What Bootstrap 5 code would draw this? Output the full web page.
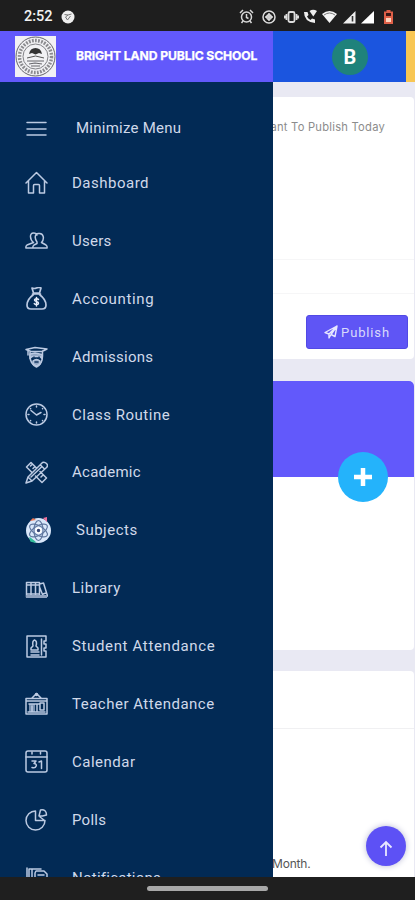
<!DOCTYPE html>
<html lang="en">
<head>
<meta charset="utf-8">
<meta name="viewport" content="width=device-width, initial-scale=1">
<title>Bright Land Public School</title>
<link href="https://cdn.jsdelivr.net/npm/bootstrap@5.3.0/dist/css/bootstrap.min.css" rel="stylesheet">
<style>
body{font-family:Inter,Roboto,sans-serif;background:#e9e9f3;width:415px;height:900px;overflow:hidden}
svg{display:block;flex:none}
.status{height:31px;background:#1e1e1e;color:#f2f2f2;font:500 14.5px/31px Roboto,sans-serif;padding:2px 21px 0 24px}
.status-icons{gap:5px;margin-right:1px}
.status-icons svg:nth-child(2){margin:0 3px}
.status-icons svg:nth-child(3){margin-right:-1px}
.stage{height:846px}
.side{width:273px;background:#022a55}
.brand{height:51px;background:#6259fb;padding-left:15px;color:#fff;font-size:12.2px;font-weight:700;letter-spacing:-.13px;-webkit-text-stroke:.25px #fff}
.brand-name{margin-left:20px}
.menu{padding-top:20px;color:#d0d9ea;font-family:Roboto,sans-serif;font-size:15px;letter-spacing:.5px}
.menu-row{height:57.9px;padding-left:25px;flex:none}
.menu-row:first-child{height:52px}
.menu-row svg{fill:none;stroke:#bccae2;stroke-width:1.5;stroke-linecap:round;stroke-linejoin:round}
.menu-row span{margin:.5px 0 0 24px;white-space:nowrap}
.menu-row.wide span{margin-left:28px}
.menu-row.wide .after-badge{margin-left:24px}
.menu-row .snug{letter-spacing:.25px}
.menu-row .airy{letter-spacing:.64px}
.page{width:142px}
.topbar{height:51px;background:#1b55df;border-right:9px solid #f8c653;padding-left:59px}
.avatar{width:36px;height:36px;background:#1f827b;color:#fff;font:700 20px/1 Roboto,sans-serif}
.panel{background:#fff;border-radius:0 4px 4px 0;width:141px;flex:none}
.publish-card{margin-top:15px;height:262px}
.prompt{height:59px;padding-right:29px;font:11.2px/60px Inter,sans-serif;color:#8c8c8c;letter-spacing:.23px}
.field{border-bottom:1px solid #f6f6f7}
.publish{width:102px;height:34px;margin:21px 6px 0 auto;background:#5f55f5;border:1px solid #5149e5;border-radius:3px;color:#d9dafb;font:13px Roboto,sans-serif;letter-spacing:.85px;gap:3px}
.profile{margin-top:22px;height:269px}
.cover{height:96px;background:#6259fb;border-radius:0 5px 0 0}
.plus{width:50px;height:50px;background:#24b3fb;right:26px;top:71px}
.report{margin-top:21px;height:206px;border-radius:0 4px 0 0}
.report-head{height:58px;border-bottom:1px solid #f0f0f2}
.month{font-size:12px;color:#555;line-height:16px;margin:127px 0 0 -1px;letter-spacing:-.2px}
.totop{width:40px;height:40px;background:#5d51f5;right:9px;bottom:11px;box-shadow:0 0 6px #b7b9d4}
.gesture{height:23px;background:#1f1f1f;padding-left:147px}
.pill{width:121px;height:5px;border-radius:3px;background:#a8a8a8}
</style>
<script src="https://cdn.jsdelivr.net/npm/bootstrap@5.3.0/dist/js/bootstrap.bundle.min.js"></script>
</head>
<body>
<header class="status d-flex align-items-center">
  <span>2:52</span>
  <svg class="ms-2" width="14" height="14" viewBox="0 0 14 14"><circle cx="7" cy="7" r="6.5" fill="#eee"/><path d="M3.500 4.500l3.500.5 3.500-1M7 5l-2.500 2 2 3 3-4" fill="none" stroke="#777"/></svg>
  <div class="status-icons d-flex align-items-center ms-auto">
    <svg width="15" height="15" viewBox="0 0 15 15" fill="none" stroke="#d8d8d8" stroke-width="1.5"><circle cx="7.5" cy="8" r="5"/><path d="M1 4l3-3M14 4l-3-3M7.500 5v3.500l2 1M4 12l-1.500 2M11 12l1.500 2"/></svg>
    <svg width="14" height="14" viewBox="0 0 14 14" fill="none" stroke="#ddd" stroke-width="1.500"><circle cx="7" cy="7" r="6"/><circle cx="7" cy="7" r="2.300"/><path d="M7 3v8M3 7h8"/></svg>
    <svg width="15" height="14" viewBox="0 0 15 14" fill="none" stroke="#ddd" stroke-width="1.800"><rect x="4.500" y="2" width="6" height="10" rx="1.500"/><path d="M2.500 4v6M12.500 4v6M.700 5.500v3M14.300 5.500v3"/></svg>
    <svg width="14" height="15" viewBox="0 0 14 15"><path d="M1 3Q1 13 12 14v-3.500l-3-1-1.500 1.500Q5 9.500 4 7.500L5.500 6 4.500 3z" fill="#eee"/><path d="M6.500 2q3.500-2.500 7.500 0l-3.700 5.500z" fill="#eee"/></svg>
    <svg width="15" height="14" viewBox="0 0 15 14"><path d="M0 4Q7.500-2 15 4L7.500 13z" fill="#f4f4f4"/><path d="M2 5Q7.500 1 13 5" fill="none" stroke="#777"/></svg>
    <svg width="14" height="14" viewBox="0 0 14 14"><path d="M1 13.500L13.500 1v12.500z" fill="#eee"/><path d="M10.500 6v5.500" stroke="#333" stroke-width="1.600"/></svg>
    <svg width="14" height="14" viewBox="0 0 14 14"><path d="M0 13.500L13 1v12.500z" fill="#fff"/></svg>
    <svg class="ms-1" width="9" height="14" viewBox="0 0 9 14"><path d="M2.500 0h4v1.500H9V14H0V1.500h2.500z" fill="#df6048"/><path d="M2 3h5v3H2z" fill="#3a1917"/><path d="M2 8h5v4H2z" fill="#ffd5bd"/></svg>
  </div>
</header>
<div class="stage d-flex overflow-hidden">
  <aside class="side d-flex flex-column flex-shrink-0">
    <div class="brand d-flex align-items-center flex-shrink-0">
      <svg width="41" height="41" viewBox="0 0 41 41"><path fill="#f1f1f4" d="M0 0h41v41H0z"/><g fill="none" stroke="#66666b"><circle cx="20.500" cy="20.500" r="19.500" stroke-width="1"/><circle cx="20.500" cy="20.500" r="16" stroke-width="3.500" stroke="#8a8a8e" stroke-dasharray="1.800 1.300"/><circle cx="20.500" cy="20.500" r="12.500" stroke-width=".8"/><path d="M12 25h17M14 28l6-1 7 1M16 30h9" stroke-width="1.200"/></g><path d="M14 18q1-6 6.500-6T27 18l-3-1-3.500 1.500L17 17z" fill="#333"/><path d="M12 22l8.500-2 8.500 2" fill="none" stroke="#555"/></svg>
      <span class="brand-name text-nowrap">BRIGHT LAND PUBLIC SCHOOL</span>
    </div>
    <nav class="menu d-flex flex-column flex-grow-1 overflow-hidden">
      <div class="menu-row wide d-flex align-items-center"><svg width="23" height="23" viewBox="0 0 23 23"><path d="M2 5.500h19M2 12h19M2 18h19"/></svg><span class="snug">Minimize Menu</span></div>
      <div class="menu-row d-flex align-items-center"><svg width="23" height="23" viewBox="0 0 23 23"><path d="M1 12L11.500 1.500 22 12M3.500 10v12h5v-7.500q0-1 1-1h4q1 0 1 1V22h5V10"/></svg><span>Dashboard</span></div>
      <div class="menu-row d-flex align-items-center"><svg width="23" height="23" viewBox="0 0 23 23"><path d="M8.500 13.500C5 11 4 4 8.500 4q3 0 3.500 2M8.500 13.500L2 16q-1.500 1-1 3h12M12 13C9 9 10 4 14 4.500c5-.5 5.500 6 2.500 9L21 16q1.500 1 1 3H8q-.5-2 1-3l3-1.500z"/></svg><span class="snug">Users</span></div>
      <div class="menu-row d-flex align-items-center"><svg width="23" height="23" viewBox="0 0 23 23"><path d="M7 1q2 1 4.500 0T16 1l-1.500 5h-6zM7.500 7h8M8.500 7.500C4 11 2 14 2 18q0 4 4 4h11q4 0 4-4c0-4-2-7-6.500-10.500" stroke-width="1.700"/><path d="M13.500 12.500c-1-1.300-4-1-4 .5 0 2 4 1 4 3.200 0 1.600-3 2-4.200.4M11.500 10.500v8.500" stroke="#e9effb"/></svg><span class="airy">Accounting</span></div>
      <div class="menu-row d-flex align-items-center"><svg width="23" height="23" viewBox="0 0 23 23"><path d="M1 4.500L10 2.500l12 1.500-5 2.500H6zM5 6v5q0 8 6.500 11 6-3 6-11V6M3 5v5"/><path d="M5 9l5-1 7 1.500v4l-2-2H7l-2 2zM8 16q3.500-3 7 0v3l-3.500 2L8 19z" fill="#91a5c2"/><path d="M9 12v1M14 12v1M10 17h3" stroke="#173a64"/></svg><span class="snug">Admissions</span></div>
      <div class="menu-row d-flex align-items-center"><svg width="23" height="23" viewBox="0 0 23 23"><circle cx="11.500" cy="11.500" r="10.500"/><path d="M6 7.500l5.500 4.500L16 9.500M11.500 3v1M11.500 19v1M3 11.500h1M19 11.500h1M5.500 5.500l.1.100M17.500 5.500l.1.100M5.500 17.500l.1.100M17.500 17.500l.1.100"/></svg><span>Class Routine</span></div>
      <div class="menu-row d-flex align-items-center"><svg width="23" height="23" viewBox="0 0 23 23"><path d="M6 1.500L1.500 6l5 5m4 4l6.500 6.500 4.500-4.500-6.500-6.500m-4-4L6 1.500M7.500 3L5.500 5M10 5.500l-2 2M18 14l-2 2M1 22l2-6L17.500 1.500q2-1 4 1t0 4L7 20zM3 16l4 4M15.500 4l4 4M6 16L17 5.500"/></svg><span class="snug">Academic</span></div>
      <div class="menu-row wide d-flex align-items-center"><svg width="27" height="27" viewBox="0 0 27 27"><circle cx="13.500" cy="13.500" r="12.500" fill="#d9e7fa" stroke="none"/><path d="M5 4l3-3 3 2z" fill="#ef7651" stroke="none"/><path d="M18 1l4-1v5z" fill="#ef729d" stroke="none"/><path d="M5 21l5 4-4-1z" fill="#35bd9b" stroke="#35bd9b"/><g stroke="#60779f" stroke-width="1.200"><ellipse cx="13.500" cy="13.500" rx="10" ry="4.500" transform="rotate(30 13.500 13.500)"/><ellipse cx="13.500" cy="13.500" rx="10" ry="4.500" transform="rotate(90 13.500 13.500)"/><ellipse cx="13.500" cy="13.500" rx="10" ry="4.500" transform="rotate(150 13.500 13.500)"/></g><circle cx="13.500" cy="13.500" r="2.500" fill="#354575" stroke="#fff"/></svg><span class="after-badge">Subjects</span></div>
      <div class="menu-row d-flex align-items-center"><svg width="23" height="23" viewBox="0 0 23 23"><path d="M1.500 5.500h13V20h-13zM6 5.500V20M10.500 5.500V20M14.500 7l4-1 4 13-4 1-4-10M1.500 17h13M1.500 8h13M18 17l3-1"/><path d="M1 18h21v3H1z" fill="#8fa2bf" stroke="none"/></svg><span>Library</span></div>
      <div class="menu-row d-flex align-items-center"><svg width="23" height="23" viewBox="0 0 23 23"><path d="M2 1h19v5h-2v3h2v4h-2v3h2v6H2zM16.500 4v16"/><path d="M8 11q-1-5 1.500-6 3 1 1.500 6l2 2v2H6v-2zM6 17h8M6 20h8"/></svg><span class="airy">Student Attendance</span></div>
      <div class="menu-row d-flex align-items-center"><svg width="23" height="23" viewBox="0 0 23 23"><path d="M1 6.500h21V22H1zM7 6l4.500-4.500L16 6M1 9h21"/><path d="M4 12h6v8H4z" fill="#7890b0" stroke="none"/><path d="M4 12h10M7 14v6M12 12v7M15 11h4v7h-4zM3 20h17"/><circle cx="11.500" cy="2.500" r="1" fill="#bccae2"/></svg><span>Teacher Attendance</span></div>
      <div class="menu-row d-flex align-items-center"><svg width="23" height="23" viewBox="0 0 23 23"><rect x="1" y="1" width="21" height="21" rx="2"/><path d="M1 7h21M7 2v2M15.500 2v2M7 11h4l-2 2.500c4 0 2.500 5.500-2 4M14 12l2.500-1v7.500"/></svg><span>Calendar</span></div>
      <div class="menu-row d-flex align-items-center"><svg width="23" height="23" viewBox="0 0 23 23"><path d="M10.500 3a9.500 9.500 0 1 0 9.500 9.500h-9.500zM14 8l1.500-6q6-1 6 5l-4 1zM15 9l4 3"/></svg><span class="snug">Polls</span></div>
      <div class="menu-row d-flex align-items-center"><svg width="23" height="23" viewBox="0 0 23 23"><path d="M10 15H4V3h12M2 2v12M7 3v8M11 5h8l3 3v12H10V7zM13 9h6M13 12h6M13 15h4"/></svg><span class="snug">Notifications</span></div>
    </nav>
  </aside>
  <main class="page d-flex flex-column overflow-hidden position-relative">
    <div class="topbar d-flex align-items-center flex-shrink-0"><div class="avatar rounded-circle d-flex align-items-center justify-content-center">B</div></div>
    <section class="panel publish-card">
      <div class="prompt d-flex justify-content-end overflow-hidden text-nowrap">ant To Publish Today</div>
      <div class="field" style="height:104px"></div>
      <div class="field" style="height:34px"></div>
      <button class="publish btn d-flex align-items-center justify-content-center p-0"><svg width="14" height="14" viewBox="0 0 14 14" fill="none" stroke="#e8e8ff" stroke-width="1.400" stroke-linejoin="round"><path d="M1 7.500L13 1l-2 10.500-4-2L5 13V9zM5 9l8-8-6 8.500"/></svg>Publish</button>
    </section>
    <section class="panel profile position-relative">
      <div class="cover"></div>
      <div class="plus position-absolute rounded-circle d-flex align-items-center justify-content-center"><svg width="18" height="18" viewBox="0 0 18 18"><path d="M9 0v18M0 9h18" stroke="#fff" stroke-width="4.500"/></svg></div>
    </section>
    <section class="panel report">
      <div class="report-head"></div>
      <div class="month">Month.</div>
    </section>
    <div class="totop position-absolute rounded-circle d-flex align-items-center justify-content-center"><svg class="mt-1" width="14" height="17" viewBox="0 0 14 17" fill="none" stroke="#e8e8ff" stroke-width="1.800"><path d="M7 16V2M1.500 7.500L7 2l5.500 5.500"/></svg></div>
  </main>
</div>
<footer class="gesture d-flex align-items-center"><div class="pill"></div></footer>
</body>
</html>
